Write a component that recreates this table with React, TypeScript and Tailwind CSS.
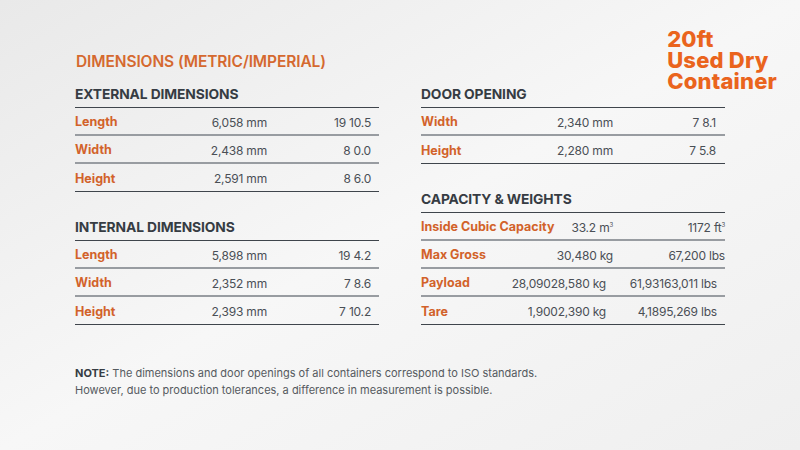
import { Fragment } from "react";

type Row = {
  label: string;
  metric: React.ReactNode;
  imperial: React.ReactNode;
  mmClass?: string;
  imClass?: string;
};

const external: Row[] = [
  { label: "Length", metric: "6,058 mm", imperial: "19 10.5" },
  { label: "Width", metric: "2,438 mm", imperial: "8 0.0" },
  { label: "Height", metric: "2,591 mm", imperial: "8 6.0" },
];

const internal: Row[] = [
  { label: "Length", metric: "5,898 mm", imperial: "19 4.2" },
  { label: "Width", metric: "2,352 mm", imperial: "7 8.6" },
  { label: "Height", metric: "2,393 mm", imperial: "7 10.2" },
];

const door: Row[] = [
  { label: "Width", metric: "2,340 mm", imperial: "7 8.1", imClass: "pr-[9px]" },
  { label: "Height", metric: "2,280 mm", imperial: "7 5.8", imClass: "pr-[9px]" },
];

const capacity: Row[] = [
  {
    label: "Inside Cubic Capacity",
    metric: (
      <>
        33.2 m<sup className="text-[6px] -top-[5px]">3</sup>
      </>
    ),
    imperial: (
      <>
        1172 ft<sup className="text-[6px] -top-[5px]">3</sup>
      </>
    ),
    imClass: "pr-0",
  },
  { label: "Max Gross", metric: "30,480 kg", imperial: "67,200 lbs", imClass: "pr-0" },
  {
    label: "Payload",
    metric: "28,09028,580 kg",
    imperial: "61,93163,011 lbs",
    mmClass: "pr-[7px]",
    imClass: "pr-[8px]",
  },
  {
    label: "Tare",
    metric: "1,9002,390 kg",
    imperial: "4,1895,269 lbs",
    mmClass: "pr-[7px]",
    imClass: "pr-[8px]",
  },
];

const SpecTable = ({
  title,
  rows,
  className = "",
}: {
  title: string;
  rows: Row[];
  className?: string;
}) => (
  <div className={className}>
    <h3 className="text-[13.8px] leading-[16px] font-bold tracking-[-0.1px] text-[#363c43] pb-[5px] border-b border-[#3f454c]">
      {title}
    </h3>
    {rows.map((r, i) => (
      <Fragment key={r.label}>
        <div
          className={`flex items-center h-[28px] pt-[3px] border-b ${
            i === rows.length - 1 ? "border-[#3f454c]" : "border-b-2 border-[#989ca1]"
          }`}
        >
          <span className="w-[120px] shrink-0 whitespace-nowrap text-[12.5px] font-bold text-[#d2622a]">
            {r.label}
          </span>
          <span
            className={`w-[72px] shrink-0 whitespace-nowrap flex justify-end text-[12px] tracking-[-0.2px] text-[#4a4f56] ${
              r.mmClass ?? ""
            }`}
          >
            <span className="whitespace-nowrap">{r.metric}</span>
          </span>
          <span
            className={`flex-1 text-right whitespace-nowrap text-[12px] tracking-[-0.2px] text-[#4a4f56] ${
              r.imClass ?? "pr-[8px]"
            }`}
          >
            {r.imperial}
          </span>
        </div>
      </Fragment>
    ))}
  </div>
);

export default function App() {
  return (
    <div
      className="w-[800px] h-[450px] overflow-hidden bg-linear-to-br from-[#e9e9e9] via-[#f7f7f7] to-[#efefef] pl-[75px] pr-[23px] pt-[29px]"
      style={{ fontFamily: "Inter, 'Liberation Sans', sans-serif" }}
    >
      <div className="flex justify-between items-start">
        <h2 className="mt-[24px] ml-[1px] text-[15.5px] leading-[18px] font-semibold tracking-[-0.1px] text-[#d5692f]">
          DIMENSIONS (METRIC/IMPERIAL)
        </h2>
        <h1 className="text-[22px] leading-[21px] font-extrabold tracking-[0.2px] text-[#ea641d]">
          20ft
          <br />
          Used Dry
          <br />
          Container
        </h1>
      </div>

      <div className="-mt-[6px] grid grid-cols-[304px_304px] gap-x-[42px]">
        <div>
          <SpecTable title="EXTERNAL DIMENSIONS" rows={external} />
          <SpecTable title="INTERNAL DIMENSIONS" rows={internal} className="mt-[27px]" />
        </div>
        <div>
          <SpecTable title="DOOR OPENING" rows={door} />
          <SpecTable title="CAPACITY & WEIGHTS" rows={capacity} className="mt-[27px]" />
        </div>
      </div>

      <p className="mt-[40px] text-[11px] leading-[17px] text-[#555a60]">
        <span className="font-bold text-[#363c43]">NOTE:</span> The dimensions and door
        openings of all containers correspond to ISO standards.
        <br />
        However, due to production tolerances, a difference in measurement is possible.
      </p>
    </div>
  );
}
